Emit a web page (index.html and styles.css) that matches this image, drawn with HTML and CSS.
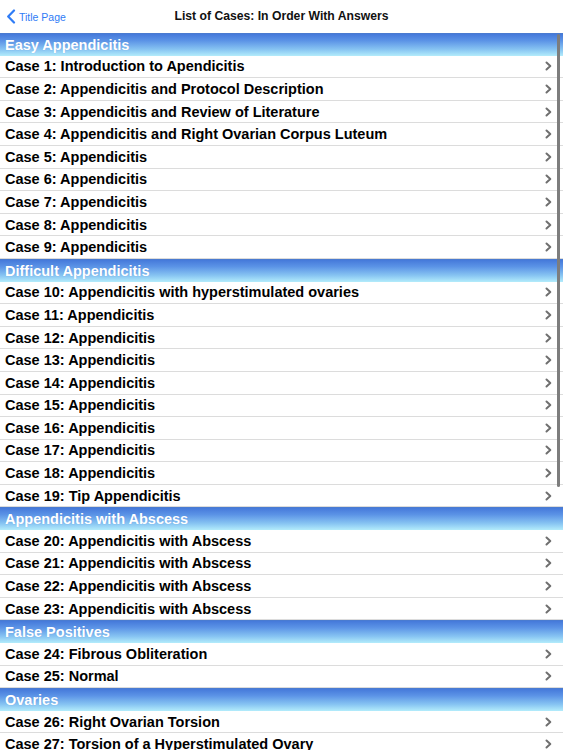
FILE: index.html
```html
<!DOCTYPE html>
<html>
<head>
<meta charset="utf-8">
<link rel="stylesheet" href="styles.css">
</head>
<body>
<div class="nav">
  <div class="back">
    <svg class="back-chev" width="10" height="15" viewBox="0 0 10 15"><path d="M8 1.5 L2.2 7.5 L8 13.5" fill="none" stroke="#2f7cf6" stroke-width="2.2" stroke-linecap="round" stroke-linejoin="round"/></svg>
    <span>Title Page</span>
  </div>
  <div class="title">List of Cases: In Order With Answers</div>
</div>
<div class="list">
  <div class="section">Easy Appendicitis</div>
  <div class="row"><span>Case 1: Introduction to Apendicitis</span><svg class="chev" width="7" height="10" viewBox="0 0 7 10"><path d="M1.5 1.5 L5.3 5 L1.5 8.5" fill="none" stroke="#6f6f6f" stroke-width="2" stroke-linecap="round" stroke-linejoin="round"/></svg></div>
  <div class="row"><span>Case 2: Appendicitis and Protocol Description</span><svg class="chev" width="7" height="10" viewBox="0 0 7 10"><path d="M1.5 1.5 L5.3 5 L1.5 8.5" fill="none" stroke="#6f6f6f" stroke-width="2" stroke-linecap="round" stroke-linejoin="round"/></svg></div>
  <div class="row"><span>Case 3: Appendicitis and Review of Literature</span><svg class="chev" width="7" height="10" viewBox="0 0 7 10"><path d="M1.5 1.5 L5.3 5 L1.5 8.5" fill="none" stroke="#6f6f6f" stroke-width="2" stroke-linecap="round" stroke-linejoin="round"/></svg></div>
  <div class="row"><span>Case 4: Appendicitis and Right Ovarian Corpus Luteum</span><svg class="chev" width="7" height="10" viewBox="0 0 7 10"><path d="M1.5 1.5 L5.3 5 L1.5 8.5" fill="none" stroke="#6f6f6f" stroke-width="2" stroke-linecap="round" stroke-linejoin="round"/></svg></div>
  <div class="row"><span>Case 5: Appendicitis</span><svg class="chev" width="7" height="10" viewBox="0 0 7 10"><path d="M1.5 1.5 L5.3 5 L1.5 8.5" fill="none" stroke="#6f6f6f" stroke-width="2" stroke-linecap="round" stroke-linejoin="round"/></svg></div>
  <div class="row"><span>Case 6: Appendicitis</span><svg class="chev" width="7" height="10" viewBox="0 0 7 10"><path d="M1.5 1.5 L5.3 5 L1.5 8.5" fill="none" stroke="#6f6f6f" stroke-width="2" stroke-linecap="round" stroke-linejoin="round"/></svg></div>
  <div class="row"><span>Case 7: Appendicitis</span><svg class="chev" width="7" height="10" viewBox="0 0 7 10"><path d="M1.5 1.5 L5.3 5 L1.5 8.5" fill="none" stroke="#6f6f6f" stroke-width="2" stroke-linecap="round" stroke-linejoin="round"/></svg></div>
  <div class="row"><span>Case 8: Appendicitis</span><svg class="chev" width="7" height="10" viewBox="0 0 7 10"><path d="M1.5 1.5 L5.3 5 L1.5 8.5" fill="none" stroke="#6f6f6f" stroke-width="2" stroke-linecap="round" stroke-linejoin="round"/></svg></div>
  <div class="row"><span>Case 9: Appendicitis</span><svg class="chev" width="7" height="10" viewBox="0 0 7 10"><path d="M1.5 1.5 L5.3 5 L1.5 8.5" fill="none" stroke="#6f6f6f" stroke-width="2" stroke-linecap="round" stroke-linejoin="round"/></svg></div>
  <div class="section">Difficult Appendicitis</div>
  <div class="row"><span>Case 10: Appendicitis with hyperstimulated ovaries</span><svg class="chev" width="7" height="10" viewBox="0 0 7 10"><path d="M1.5 1.5 L5.3 5 L1.5 8.5" fill="none" stroke="#6f6f6f" stroke-width="2" stroke-linecap="round" stroke-linejoin="round"/></svg></div>
  <div class="row"><span>Case 11: Appendicitis</span><svg class="chev" width="7" height="10" viewBox="0 0 7 10"><path d="M1.5 1.5 L5.3 5 L1.5 8.5" fill="none" stroke="#6f6f6f" stroke-width="2" stroke-linecap="round" stroke-linejoin="round"/></svg></div>
  <div class="row"><span>Case 12: Appendicitis</span><svg class="chev" width="7" height="10" viewBox="0 0 7 10"><path d="M1.5 1.5 L5.3 5 L1.5 8.5" fill="none" stroke="#6f6f6f" stroke-width="2" stroke-linecap="round" stroke-linejoin="round"/></svg></div>
  <div class="row"><span>Case 13: Appendicitis</span><svg class="chev" width="7" height="10" viewBox="0 0 7 10"><path d="M1.5 1.5 L5.3 5 L1.5 8.5" fill="none" stroke="#6f6f6f" stroke-width="2" stroke-linecap="round" stroke-linejoin="round"/></svg></div>
  <div class="row"><span>Case 14: Appendicitis</span><svg class="chev" width="7" height="10" viewBox="0 0 7 10"><path d="M1.5 1.5 L5.3 5 L1.5 8.5" fill="none" stroke="#6f6f6f" stroke-width="2" stroke-linecap="round" stroke-linejoin="round"/></svg></div>
  <div class="row"><span>Case 15: Appendicitis</span><svg class="chev" width="7" height="10" viewBox="0 0 7 10"><path d="M1.5 1.5 L5.3 5 L1.5 8.5" fill="none" stroke="#6f6f6f" stroke-width="2" stroke-linecap="round" stroke-linejoin="round"/></svg></div>
  <div class="row"><span>Case 16: Appendicitis</span><svg class="chev" width="7" height="10" viewBox="0 0 7 10"><path d="M1.5 1.5 L5.3 5 L1.5 8.5" fill="none" stroke="#6f6f6f" stroke-width="2" stroke-linecap="round" stroke-linejoin="round"/></svg></div>
  <div class="row"><span>Case 17: Appendicitis</span><svg class="chev" width="7" height="10" viewBox="0 0 7 10"><path d="M1.5 1.5 L5.3 5 L1.5 8.5" fill="none" stroke="#6f6f6f" stroke-width="2" stroke-linecap="round" stroke-linejoin="round"/></svg></div>
  <div class="row"><span>Case 18: Appendicitis</span><svg class="chev" width="7" height="10" viewBox="0 0 7 10"><path d="M1.5 1.5 L5.3 5 L1.5 8.5" fill="none" stroke="#6f6f6f" stroke-width="2" stroke-linecap="round" stroke-linejoin="round"/></svg></div>
  <div class="row"><span>Case 19: Tip Appendicitis</span><svg class="chev" width="7" height="10" viewBox="0 0 7 10"><path d="M1.5 1.5 L5.3 5 L1.5 8.5" fill="none" stroke="#6f6f6f" stroke-width="2" stroke-linecap="round" stroke-linejoin="round"/></svg></div>
  <div class="section">Appendicitis with Abscess</div>
  <div class="row"><span>Case 20: Appendicitis with Abscess</span><svg class="chev" width="7" height="10" viewBox="0 0 7 10"><path d="M1.5 1.5 L5.3 5 L1.5 8.5" fill="none" stroke="#6f6f6f" stroke-width="2" stroke-linecap="round" stroke-linejoin="round"/></svg></div>
  <div class="row"><span>Case 21: Appendicitis with Abscess</span><svg class="chev" width="7" height="10" viewBox="0 0 7 10"><path d="M1.5 1.5 L5.3 5 L1.5 8.5" fill="none" stroke="#6f6f6f" stroke-width="2" stroke-linecap="round" stroke-linejoin="round"/></svg></div>
  <div class="row"><span>Case 22: Appendicitis with Abscess</span><svg class="chev" width="7" height="10" viewBox="0 0 7 10"><path d="M1.5 1.5 L5.3 5 L1.5 8.5" fill="none" stroke="#6f6f6f" stroke-width="2" stroke-linecap="round" stroke-linejoin="round"/></svg></div>
  <div class="row"><span>Case 23: Appendicitis with Abscess</span><svg class="chev" width="7" height="10" viewBox="0 0 7 10"><path d="M1.5 1.5 L5.3 5 L1.5 8.5" fill="none" stroke="#6f6f6f" stroke-width="2" stroke-linecap="round" stroke-linejoin="round"/></svg></div>
  <div class="section">False Positives</div>
  <div class="row"><span>Case 24: Fibrous Obliteration</span><svg class="chev" width="7" height="10" viewBox="0 0 7 10"><path d="M1.5 1.5 L5.3 5 L1.5 8.5" fill="none" stroke="#6f6f6f" stroke-width="2" stroke-linecap="round" stroke-linejoin="round"/></svg></div>
  <div class="row"><span>Case 25: Normal</span><svg class="chev" width="7" height="10" viewBox="0 0 7 10"><path d="M1.5 1.5 L5.3 5 L1.5 8.5" fill="none" stroke="#6f6f6f" stroke-width="2" stroke-linecap="round" stroke-linejoin="round"/></svg></div>
  <div class="section">Ovaries</div>
  <div class="row"><span>Case 26: Right Ovarian Torsion</span><svg class="chev" width="7" height="10" viewBox="0 0 7 10"><path d="M1.5 1.5 L5.3 5 L1.5 8.5" fill="none" stroke="#6f6f6f" stroke-width="2" stroke-linecap="round" stroke-linejoin="round"/></svg></div>
  <div class="row"><span>Case 27: Torsion of a Hyperstimulated Ovary</span><svg class="chev" width="7" height="10" viewBox="0 0 7 10"><path d="M1.5 1.5 L5.3 5 L1.5 8.5" fill="none" stroke="#6f6f6f" stroke-width="2" stroke-linecap="round" stroke-linejoin="round"/></svg></div>
  <div class="scrollbar"></div>
</div>
</body>
</html>
```
FILE: styles.css
```css
html, body {
  margin: 0;
  padding: 0;
  background: #ffffff;
  overflow: hidden;
  height: 750px;
}
body {
  font-family: "Liberation Sans", Arial, sans-serif;
  color: #000;
}
.nav {
  height: 33px;
  position: relative;
  display: flex;
  align-items: center;
  justify-content: center;
  background: #fff;
}
.back {
  position: absolute;
  left: 6px;
  top: 9px;
  display: flex;
  align-items: center;
  gap: 3px;
  color: #2f7cf6;
  font-size: 10.5px;
}
.title {
  font-size: 12.2px;
  font-weight: bold;
  color: #111;
  margin-top: -1px;
}
.list {
  position: relative;
}
.section {
  height: 22.6px;
  box-sizing: border-box;
  padding-left: 5px;
  display: flex;
  align-items: center;
  color: #fff;
  font-weight: bold;
  font-size: 14.5px;
  background: linear-gradient(to bottom, #4579da 0%, #5b93e6 30%, #87c4f2 70%, #b3ecfb 100%);
  border-top: 1px solid #4a7bd0;
  text-shadow: 0 0 1px rgba(60,110,200,0.4);
}
.row {
  height: 22.6px;
  box-sizing: border-box;
  padding-left: 5px;
  padding-right: 11px;
  display: flex;
  align-items: center;
  justify-content: space-between;
  font-weight: bold;
  font-size: 14.5px;
  border-bottom: 1px solid #dcdcdc;
}
.row span {
  white-space: nowrap;
}
.chev {
  flex: none;
  display: block;
}
.scrollbar {
  position: absolute;
  right: 3px;
  top: 1px;
  width: 3px;
  height: 453px;
  border-radius: 2px;
  background: #7d7d7d;
}
```
